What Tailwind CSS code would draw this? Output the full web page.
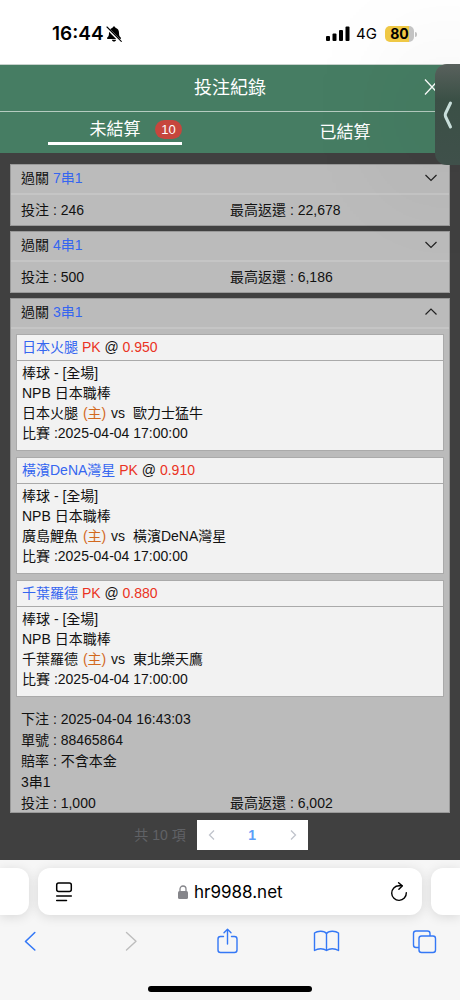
<!DOCTYPE html>
<html lang="zh-Hant">
<head>
    <meta charset="UTF-8">
    <meta name="viewport" content="width=device-width, initial-scale=1.0">
    <title>投注紀錄</title>
    <script src="https://cdn.jsdelivr.net/npm/@tailwindcss/browser@4"></script>
</head>
<body class="relative min-h-screen flex flex-col overflow-x-hidden bg-[#404040] text-[14px] leading-5 text-[#111] font-['Liberation_Sans','Noto_Sans_CJK_TC',sans-serif]">
    <!-- Status bar -->
    <div class="flex items-center justify-between h-[65px] pt-1 pl-[52px] pr-[43px] bg-white border-b border-[#c8d2cd] text-black font-[Inter,sans-serif]">
        <div class="flex items-center gap-[2px]">
            <span class="text-[19px] font-semibold">16:44</span>
            <svg class="w-4 h-4" viewBox="0 0 16 16">
                <path d="M8 .5c.8 0 1.300.5 1.400 1.200C11.700 2.300 13 4.200 13 6.700c0 3 .6 3.800 1.700 4.900.6.700.3 1.400-.5 1.400H1.800c-.8 0-1.100-.7-.5-1.400C2.400 10.500 3 9.700 3 6.700c0-2.500 1.300-4.400 3.600-5C6.700 1 7.200.5 8 .5z" fill="#000"/>
                <path d="M5.800 13.800h4.400c-.3 1.100-1.100 1.800-2.200 1.800s-1.900-.7-2.200-1.800z" fill="#000"/>
                <path d="M.5 1.500L14.500 15.500" stroke="#fff" stroke-width="2.600"/>
                <path d="M1 1L15.300 15.300" stroke="#000" stroke-width="1.100" stroke-linecap="round"/>
            </svg>
        </div>
        <div class="flex items-center">
            <svg class="w-6 h-4" viewBox="0 0 24 16">
                <rect x="0" y="10" width="4" height="5" rx="1"/>
                <rect x="6.500" y="7.500" width="4" height="7.500" rx="1"/>
                <rect x="13" y="4" width="4" height="11" rx="1"/>
                <rect x="19.500" y="0.500" width="4" height="14.500" rx="1"/>
            </svg>
            <span class="ml-[6px] text-[15px]">4G</span>
            <span class="relative z-10 ml-2 w-[29px] h-4 rounded-[5px] bg-linear-to-r from-[#efc845] from-83% to-[#c4c4c4] to-83% text-center text-[14px] leading-4 font-bold">80</span>
            <span class="ml-[1px] w-[2px] h-[5px] rounded-r-full bg-[#c4c4c4]"></span>
        </div>
    </div>

    <!-- Header -->
    <header class="relative flex items-center justify-center h-[47px] bg-[#467d63] border-b border-[#b5cbc0] text-white">
        <h1 class="text-[18px]">投注紀錄</h1>
        <button type="button" aria-label="關閉" class="absolute right-[20px] top-[14px]">
            <svg class="w-4 h-4" viewBox="0 0 16 16" fill="none" stroke="#fff" stroke-width="1.300"><path d="M1 0.500L15 15.500M15 0.500L1 15.500"/></svg>
        </button>
    </header>

    <!-- Tabs -->
    <div class="grid grid-cols-2 h-[41px] bg-[#467d63] text-white text-[17px]">
        <button type="button" class="flex justify-center items-start">
            <span class="relative w-[134px] h-[33px] pt-2 border-b-3 border-white">
                未結算
                <span class="absolute right-0 top-2 w-[27px] h-[19px] rounded-full bg-[#c6463d] text-[13px] leading-[19px]">10</span>
            </span>
        </button>
        <button type="button">已結算</button>
    </div>

    <!-- Bets -->
    <main class="flex-1 px-[10px] pt-[11px] pb-[10px]">
        <div class="flex flex-col gap-[5px]">
            <section class="bg-[#bbb] border border-[#999]">
                <button type="button" class="flex items-center justify-between w-full h-[30px] px-[10px] pb-[2px] border-b-2 border-[#c5c5c5]">
                    <span>過關 <span class="text-[#3566f0]">7串1</span></span>
                    <svg class="w-4 h-4" viewBox="0 0 16 16" fill="none" stroke="#222" stroke-width="1.200"><path d="M2.500 5L8 10.500L13.500 5"/></svg>
                </button>
                <div class="grid grid-cols-2 items-center h-[30px] px-[10px]">
                    <span>投注 : 246</span>
                    <span>最高返還 : 22,678</span>
                </div>
            </section>

            <section class="bg-[#bbb] border border-[#999]">
                <button type="button" class="flex items-center justify-between w-full h-[30px] px-[10px] pb-[2px] border-b-2 border-[#c5c5c5]">
                    <span>過關 <span class="text-[#3566f0]">4串1</span></span>
                    <svg class="w-4 h-4" viewBox="0 0 16 16" fill="none" stroke="#222" stroke-width="1.200"><path d="M2.500 5L8 10.500L13.500 5"/></svg>
                </button>
                <div class="grid grid-cols-2 items-center h-[30px] px-[10px]">
                    <span>投注 : 500</span>
                    <span>最高返還 : 6,186</span>
                </div>
            </section>

            <section class="bg-[#bbb] border border-[#999]">
                <button type="button" class="flex items-center justify-between w-full h-[30px] px-[10px] pb-[2px] border-b-2 border-[#c5c5c5]">
                    <span>過關 <span class="text-[#3566f0]">3串1</span></span>
                    <svg class="w-4 h-4" viewBox="0 0 16 16" fill="none" stroke="#222" stroke-width="1.200"><path d="M2.500 10.500L8 5L13.500 10.500"/></svg>
                </button>
                <div class="flex flex-col gap-[6px] px-[5px] pt-[5px]">
                    <article class="bg-[#f2f2f2] border border-[#aaa]">
                        <h2 class="h-[26px] px-[5px] leading-[25px] border-b border-[#aaa]"><span class="text-[#3566f0]">日本火腿</span> <span class="text-[#ea3323]">PK</span> @ <span class="text-[#ea3323]">0.950</span></h2>
                        <div class="px-[5px] pt-[2px] pb-[7px]">
                            <p>棒球 - [全場]</p>
                            <p>NPB 日本職棒</p>
                            <p>日本火腿 <span class="mx-[1px] text-[#d2691e]">(主)</span> vs&nbsp; 歐力士猛牛</p>
                            <p>比賽 :2025-04-04 17:00:00</p>
                        </div>
                    </article>
                    <article class="bg-[#f2f2f2] border border-[#aaa]">
                        <h2 class="h-[26px] px-[5px] leading-[25px] border-b border-[#aaa]"><span class="text-[#3566f0]">橫濱DeNA灣星</span> <span class="text-[#ea3323]">PK</span> @ <span class="text-[#ea3323]">0.910</span></h2>
                        <div class="px-[5px] pt-[2px] pb-[7px]">
                            <p>棒球 - [全場]</p>
                            <p>NPB 日本職棒</p>
                            <p>廣島鯉魚 <span class="mx-[1px] text-[#d2691e]">(主)</span> vs&nbsp; 橫濱DeNA灣星</p>
                            <p>比賽 :2025-04-04 17:00:00</p>
                        </div>
                    </article>
                    <article class="bg-[#f2f2f2] border border-[#aaa]">
                        <h2 class="h-[26px] px-[5px] leading-[25px] border-b border-[#aaa]"><span class="text-[#3566f0]">千葉羅德</span> <span class="text-[#ea3323]">PK</span> @ <span class="text-[#ea3323]">0.880</span></h2>
                        <div class="px-[5px] pt-[2px] pb-[7px]">
                            <p>棒球 - [全場]</p>
                            <p>NPB 日本職棒</p>
                            <p>千葉羅德 <span class="mx-[1px] text-[#d2691e]">(主)</span> vs&nbsp; 東北樂天鷹</p>
                            <p>比賽 :2025-04-04 17:00:00</p>
                        </div>
                    </article>
                </div>
                <div class="px-[10px] pt-3 leading-[21px]">
                    <p>下注 : 2025-04-04 16:43:03</p>
                    <p>單號 : 88465864</p>
                    <p>賠率 : 不含本金</p>
                    <p>3串1</p>
                    <div class="grid grid-cols-2 h-[19px]">
                        <span>投注 : 1,000</span>
                        <span>最高返還 : 6,002</span>
                    </div>
                </div>
            </section>
        </div>

        <!-- Pagination -->
        <nav class="flex items-center justify-center gap-[11px] mt-[7px] pr-[18px]" aria-label="分頁">
            <span class="text-[#606266]">共 10 項</span>
            <div class="flex justify-between w-[111px] h-[30px] bg-white">
                <button type="button" aria-label="上一頁" class="flex items-center justify-center w-[30px]">
                    <svg class="w-3 h-3" viewBox="0 0 12 12" fill="none" stroke="#c0c4cc" stroke-width="1.300"><path d="M8 1.500L3.500 6L8 10.500"/></svg>
                </button>
                <button type="button" class="w-[30px] font-bold text-[#5c9ef8]">1</button>
                <button type="button" aria-label="下一頁" class="flex items-center justify-center w-[30px]">
                    <svg class="w-3 h-3" viewBox="0 0 12 12" fill="none" stroke="#c0c4cc" stroke-width="1.300"><path d="M4 1.500L8.500 6L4 10.500"/></svg>
                </button>
            </div>
        </nav>
    </main>

    <!-- Browser bar -->
    <footer class="h-[140px] pt-2 bg-[#f6f6f6]">
        <div class="flex gap-[9px] h-[47px]">
            <div class="w-[29px] rounded-r-xl bg-white shadow-[0_2px_12px_rgba(0,0,0,0.12)]"></div>
            <div class="flex-1 flex items-center justify-between pl-[17px] pr-[13px] rounded-xl bg-white shadow-[0_2px_12px_rgba(0,0,0,0.12)]">
                <button type="button" aria-label="頁面選單">
                    <svg class="w-[18px] h-5" viewBox="0 0 18 20" fill="none" stroke="#000" stroke-width="1.500" stroke-linecap="round"><rect x="1.700" y="1" width="14.600" height="8.600" rx="2"/><path d="M1.700 14H16.300M1.700 18.500H11.500"/></svg>
                </button>
                <label class="flex items-center gap-[6px] pl-1">
                    <svg class="w-[10px] h-[14px]" viewBox="0 0 10 14"><rect x="0" y="6" width="10" height="8" rx="1.500" fill="#85858a"/><path d="M2 6.500V4a3 3 0 0 1 6 0V6.500" fill="none" stroke="#85858a" stroke-width="1.300"/></svg>
                    <input type="text" value="hr9988.net" aria-label="網址" class="w-[94px] text-[17px] text-black font-[Inter,sans-serif]">
                </label>
                <button type="button" aria-label="重新載入">
                    <svg class="w-5 h-5" viewBox="0 0 20 20" fill="none" stroke="#000" stroke-width="1.400" stroke-linecap="round" stroke-linejoin="round"><path d="M17.300 10.800A7.300 7.300 0 1 1 10 3.800H13"/><path d="M9.600 0.800L13.200 3.900L9.900 7.200"/></svg>
                </button>
            </div>
            <div class="w-[29px] rounded-l-xl bg-white shadow-[0_2px_12px_rgba(0,0,0,0.12)]"></div>
        </div>
        <div class="flex items-center justify-between pl-[16px] pr-[22px] pt-[12px]">
            <button type="button" aria-label="返回">
                <svg class="w-7 h-7" viewBox="0 0 28 28" fill="none" stroke="#3478f6" stroke-width="1.600" stroke-linecap="round" stroke-linejoin="round"><path d="M18.800 5.500L9.500 14.500L18.800 23"/></svg>
            </button>
            <button type="button" aria-label="前進" disabled>
                <svg class="w-7 h-7" viewBox="0 0 28 28" fill="none" stroke="#bdbdbd" stroke-width="1.400" stroke-linecap="round" stroke-linejoin="round"><path d="M11.500 5.500L21 14.300L11.500 23"/></svg>
            </button>
            <button type="button" aria-label="分享">
                <svg class="w-7 h-7" viewBox="0 0 28 28" fill="none" stroke="#3478f6" stroke-width="1.400" stroke-linecap="round" stroke-linejoin="round"><path d="M10.500 9.500H7.500a2.500 2.500 0 0 0-2.500 2.500V23a2.500 2.500 0 0 0 2.500 2.500H21.500a2.500 2.500 0 0 0 2.500-2.500V12a2.500 2.500 0 0 0-2.500-2.500H18.500"/><path d="M14.500 17V2.500M11 5.800L14.500 2.300L18 5.800"/></svg>
            </button>
            <button type="button" aria-label="書籤">
                <svg class="w-7 h-7" viewBox="0 0 28 28" fill="none" stroke="#3478f6" stroke-width="1.400" stroke-linecap="round" stroke-linejoin="round"><path d="M14.500 6.500C12.500 3.500 5.500 3.500 2.500 6V23.500C6 21.200 11.500 21.200 14.500 23.500C17.500 21.200 23 21.200 26.500 23.500V6C23.500 3.500 16.500 3.500 14.500 6.500zV23.500"/></svg>
            </button>
            <button type="button" aria-label="分頁">
                <svg class="w-7 h-7" viewBox="0 0 28 28" fill="none" stroke="#3478f6" stroke-width="1.400" stroke-linejoin="round"><rect x="9" y="9" width="16.500" height="16.500" rx="2.500"/><path d="M9 20.500H6a2.500 2.500 0 0 1-2.500-2.500V6.500A2.500 2.500 0 0 1 6 4H17.500A2.500 2.500 0 0 1 20 6.500V9"/></svg>
            </button>
        </div>
        <div class="w-[164px] h-[6px] mx-auto mt-[31px] rounded-full bg-black"></div>
    </footer>

    <!-- Floating edge handle -->
    <button type="button" aria-label="展開" class="absolute right-0 top-16 flex items-center justify-center w-[25px] h-[101px] rounded-l-xl bg-linear-to-b from-[#59615d] via-[#3b5046] via-35% to-[#3f504a] shadow-[0_0_120px_rgba(0,0,0,0.28)]">
        <svg class="w-3 h-7" viewBox="0 0 12 28" fill="none" stroke="#c9dfdb" stroke-width="3" stroke-linecap="round" stroke-linejoin="round"><path d="M8.500 2L3.500 12.500Q3 14 3.500 15.500L8.500 26"/></svg>
    </button>
</body>
</html>
